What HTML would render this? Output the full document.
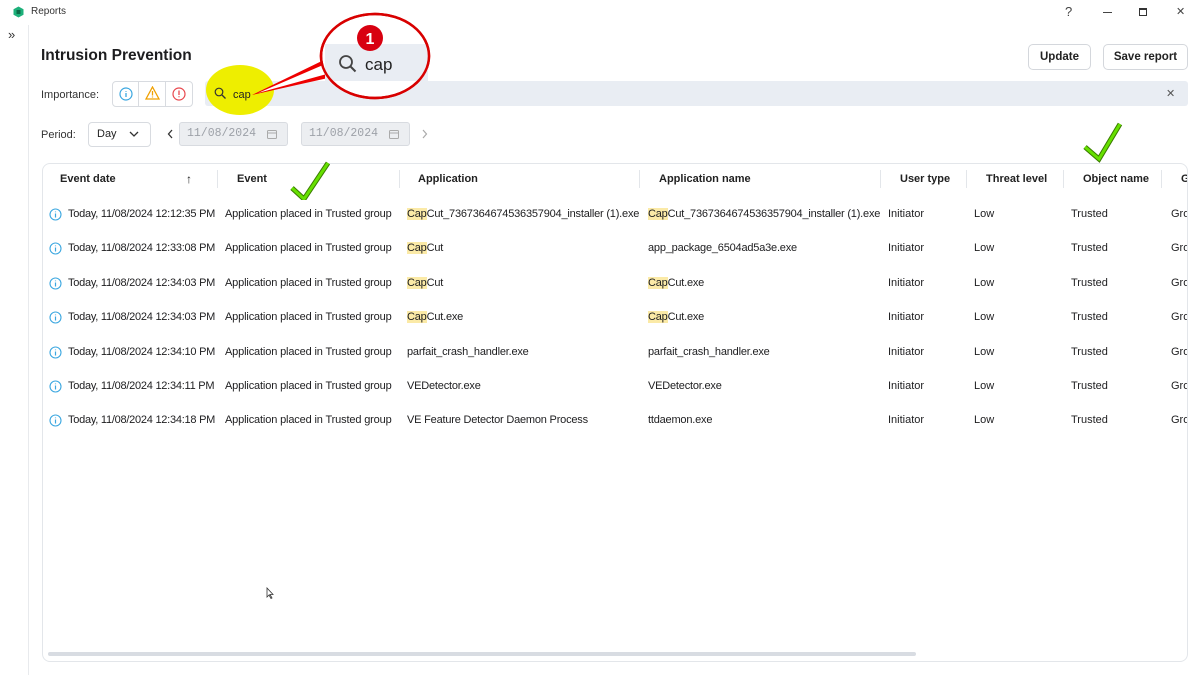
<!DOCTYPE html>
<html><head><meta charset="utf-8"><style>
*{margin:0;padding:0;box-sizing:border-box}
body{width:1200px;height:675px;position:relative;background:#fff;font-family:"Liberation Sans",sans-serif;color:#1d1d1f;overflow:hidden;font-size:11px}
.a{position:absolute;white-space:nowrap}
.h{font-weight:bold;font-size:11px;color:#222}
.hl{background:#fbeaa7}
.sep{position:absolute;width:1px;height:18px;background:#e3e6ea;top:170px}
.btn{position:absolute;border:1px solid #d4d7dc;border-radius:5px;background:#fff;font-size:11.5px;font-weight:bold;text-align:center;line-height:24px;height:26px;color:#222}
.date{position:absolute;height:24px;background:#eceef1;border:1px solid #d8dbe0;border-radius:3px;font-family:"Liberation Mono",monospace;color:#9da1a8;font-size:11.5px;line-height:22px;padding-left:7px}
</style></head><body>
<svg class="a" style="left:13px;top:6px" width="11" height="12" viewBox="0 0 11 12"><path d="M5.5 0.5 L10.5 3.2 V8.8 L5.5 11.5 L0.5 8.8 V3.2Z" fill="#1db07a"/><rect x="3.5" y="4" width="4" height="4" fill="#0d6b48"/></svg>
<div class="a" style="left:31px;top:6px;font-size:10px;color:#333">Reports</div>
<div class="a" style="left:1065px;top:4px;font-size:13px;color:#444">?</div>
<div class="a" style="left:1103px;top:12px;width:9px;height:1px;background:#444"></div>
<div class="a" style="left:1139px;top:8px;width:8px;height:8px;border:1px solid #333;border-top-width:2px"></div>
<div class="a" style="left:1176px;top:5px;font-size:11px;color:#444">✕</div>
<div class="a" style="left:8px;top:27px;font-size:13px;color:#333">»</div>
<div class="a" style="left:28px;top:25px;width:1px;height:650px;background:#e8eaed"></div>
<div class="a" style="left:41px;top:47px;font-size:15.5px;font-weight:bold">Intrusion Prevention</div>
<div class="btn" style="left:1028px;top:44px;width:63px">Update</div>
<div class="btn" style="left:1103px;top:44px;width:85px">Save report</div>
<div class="a" style="left:41px;top:89px;color:#333">Importance:</div>
<div class="a" style="left:112px;top:81px;width:81px;height:26px;border:1px solid #d8dbe0;border-radius:4px"></div>
<div class="a" style="left:138px;top:82px;width:1px;height:24px;background:#d8dbe0"></div>
<div class="a" style="left:165px;top:82px;width:1px;height:24px;background:#d8dbe0"></div>
<svg class="a" style="left:119px;top:87px" width="14" height="14"><circle cx="7" cy="7" r="6" fill="none" stroke="#3ba7e0" stroke-width="1.2"/><path d="M7 6v4M7 4v.8" stroke="#3ba7e0" stroke-width="1.3"/></svg>
<svg class="a" style="left:145px;top:86px" width="15" height="14"><path d="M7.5 1L14 13H1Z" fill="none" stroke="#f0a000" stroke-width="1.3"/><path d="M7.5 5v4.5M7.5 10.5v1" stroke="#f0a000" stroke-width="1.3"/></svg>
<svg class="a" style="left:172px;top:87px" width="14" height="14"><circle cx="7" cy="7" r="6" fill="none" stroke="#e8474d" stroke-width="1.2"/><path d="M7 3.5v4.5M7 9.3v1" stroke="#e8474d" stroke-width="1.3"/></svg>
<div class="a" style="left:205px;top:81px;width:983px;height:25px;background:#e9edf3;border-radius:3px"></div>
<div class="a" style="left:1166px;top:87px;font-size:11px;color:#555">✕</div>
<div class="a" style="left:206px;top:65px;width:68px;height:50px;border-radius:50%;background:#eeee00"></div>
<svg class="a" style="left:214px;top:87px" width="13" height="13"><circle cx="5" cy="5" r="3.8" fill="none" stroke="#333" stroke-width="1.2"/><path d="M8 8l3.5 3.5" stroke="#333" stroke-width="1.3"/></svg>
<div class="a" style="left:233px;top:89px;color:#222">cap</div>
<div class="a" style="left:41px;top:129px;color:#333">Period:</div>
<div class="a" style="left:88px;top:122px;width:63px;height:25px;border:1px solid #d8dbe0;border-radius:4px"></div>
<div class="a" style="left:97px;top:128px;color:#222">Day</div>
<svg class="a" style="left:129px;top:131px" width="10" height="7"><path d="M1 1l4 4 4-4" fill="none" stroke="#333" stroke-width="1.3"/></svg>
<svg class="a" style="left:167px;top:129px" width="7" height="10"><path d="M5 1L1.5 5 5 9" fill="none" stroke="#333" stroke-width="1.3"/></svg>
<div class="date" style="left:179px;top:122px;width:109px">11/08/2024</div>
<div class="date" style="left:301px;top:122px;width:109px">11/08/2024</div>
<svg class="a" style="left:267px;top:129px" width="10" height="10"><rect x="0.5" y="1.5" width="9" height="8" rx="1" fill="none" stroke="#aaa"/><path d="M0.5 4h9" stroke="#aaa"/></svg>
<svg class="a" style="left:389px;top:129px" width="10" height="10"><rect x="0.5" y="1.5" width="9" height="8" rx="1" fill="none" stroke="#aaa"/><path d="M0.5 4h9" stroke="#aaa"/></svg>
<svg class="a" style="left:421px;top:129px" width="7" height="10"><path d="M2 1l3.5 4L2 9" fill="none" stroke="#aaa" stroke-width="1.2"/></svg>
<div class="a" style="left:42px;top:163px;width:1146px;height:499px;border:1px solid #e3e6ea;border-radius:8px"></div>
<div class="a h" style="left:60px;top:173px">Event date</div>
<div class="a h" style="left:186px;top:172px;font-size:12px">↑</div>
<div class="sep" style="left:217px"></div>
<div class="a h" style="left:237px;top:173px">Event</div>
<div class="sep" style="left:399px"></div>
<div class="a h" style="left:418px;top:173px">Application</div>
<div class="sep" style="left:639px"></div>
<div class="a h" style="left:659px;top:173px">Application name</div>
<div class="sep" style="left:880px"></div>
<div class="a h" style="left:900px;top:173px">User type</div>
<div class="sep" style="left:966px"></div>
<div class="a h" style="left:986px;top:173px">Threat level</div>
<div class="sep" style="left:1063px"></div>
<div class="a h" style="left:1083px;top:173px">Object name</div>
<div class="sep" style="left:1161px"></div>
<div class="a h" style="left:1181px;top:173px;width:6px;overflow:hidden">G</div>
<div class="a" style="left:48px;top:652px;width:868px;height:4px;background:#d8dce2;border-radius:2px"></div>
<div id="rows"></div>
<script>
const rows=[
["Today, 11/08/2024 12:12:35 PM",'<span class="hl">Cap</span>Cut_7367364674536357904_installer (1).exe','<span class="hl">Cap</span>Cut_7367364674536357904_installer (1).exe'],
["Today, 11/08/2024 12:33:08 PM",'<span class="hl">Cap</span>Cut','app_package_6504ad5a3e.exe'],
["Today, 11/08/2024 12:34:03 PM",'<span class="hl">Cap</span>Cut','<span class="hl">Cap</span>Cut.exe'],
["Today, 11/08/2024 12:34:03 PM",'<span class="hl">Cap</span>Cut.exe','<span class="hl">Cap</span>Cut.exe'],
["Today, 11/08/2024 12:34:10 PM",'parfait_crash_handler.exe','parfait_crash_handler.exe'],
["Today, 11/08/2024 12:34:11 PM",'VEDetector.exe','VEDetector.exe'],
["Today, 11/08/2024 12:34:18 PM",'VE Feature Detector Daemon Process','ttdaemon.exe']];
let h='';rows.forEach((r,i)=>{const y=208+i*34.4;
h+=`<svg class="a" style="left:49px;top:${y}px" width="13" height="13"><circle cx="6.5" cy="6.5" r="5.5" fill="none" stroke="#3ba7e0" stroke-width="1.1"/><path d="M6.5 5.5v4M6.5 3.5v.8" stroke="#3ba7e0" stroke-width="1.2"/></svg>
<div class="a" style="left:68px;top:${y}px;letter-spacing:-0.25px">${r[0]}</div>
<div class="a" style="left:225px;top:${y}px;letter-spacing:-0.15px">Application placed in Trusted group</div>
<div class="a" style="left:407px;top:${y}px;letter-spacing:-0.2px">${r[1]}</div>
<div class="a" style="left:648px;top:${y}px;letter-spacing:-0.2px">${r[2]}</div>
<div class="a" style="left:888px;top:${y}px">Initiator</div>
<div class="a" style="left:974px;top:${y}px">Low</div>
<div class="a" style="left:1071px;top:${y}px">Trusted</div>
<div class="a" style="left:1171px;top:${y}px;width:16px;overflow:hidden">Group</div>`});
document.getElementById('rows').innerHTML=h;
</script>
<svg class="a" style="left:266px;top:587px" width="8" height="12"><path d="M1 1v9l2-2 2 3.5 1-.5-2-3.5h3z" fill="#fff" stroke="#333" stroke-width="0.8"/></svg>
<svg class="a" style="left:0;top:0" width="1200" height="200">
<path d="M252 95 L328 58 L337 76 Z" fill="#e00"/>
<ellipse cx="375" cy="56" rx="54" ry="42" fill="#fff" stroke="#d80000" stroke-width="2.5"/>
<path d="M258 93 L330 62 L334 72 Z" fill="#fff"/>
<rect x="325" y="44" width="103" height="37" fill="#e9edf3"/>
<ellipse cx="375" cy="56" rx="54" ry="42" fill="none" stroke="#d80000" stroke-width="2.5"/>
<circle cx="346" cy="62" r="6" fill="none" stroke="#444" stroke-width="1.8"/><path d="M350.5 66.5l5 5" stroke="#444" stroke-width="2"/>
<text x="365" y="70" font-family="Liberation Sans" font-size="17" fill="#222">cap</text>
<circle cx="370" cy="38" r="13" fill="#d80010"/>
<text x="370" y="44" font-family="Liberation Sans" font-size="16" font-weight="bold" fill="#fff" text-anchor="middle">1</text>
<path d="M292 188 L304 199 L328 163" fill="none" stroke="#3a7a00" stroke-width="5"/>
<path d="M292 188 L304 199 L328 163" fill="none" stroke="#66e000" stroke-width="3"/>
<path d="M1085 147 L1099 159 L1120 124" fill="none" stroke="#3a7a00" stroke-width="5"/>
<path d="M1085 147 L1099 159 L1120 124" fill="none" stroke="#66e000" stroke-width="3"/>
</svg>
</body></html>
